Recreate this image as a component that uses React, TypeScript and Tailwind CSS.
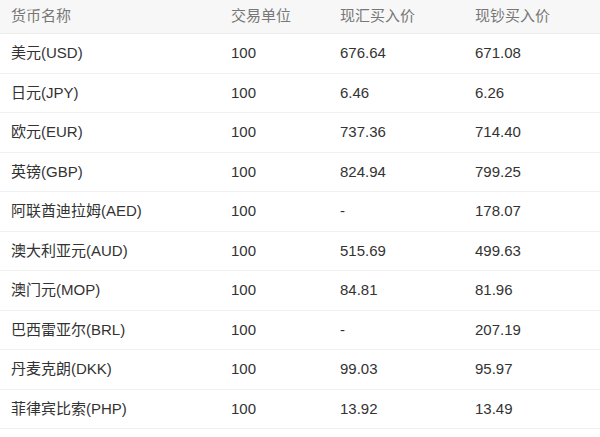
import React from 'react';

const rows: [string, string, string, string][] = [
  ['美元(USD)', '100', '676.64', '671.08'],
  ['日元(JPY)', '100', '6.46', '6.26'],
  ['欧元(EUR)', '100', '737.36', '714.40'],
  ['英镑(GBP)', '100', '824.94', '799.25'],
  ['阿联酋迪拉姆(AED)', '100', '-', '178.07'],
  ['澳大利亚元(AUD)', '100', '515.69', '499.63'],
  ['澳门元(MOP)', '100', '84.81', '81.96'],
  ['巴西雷亚尔(BRL)', '100', '-', '207.19'],
  ['丹麦克朗(DKK)', '100', '99.03', '95.97'],
  ['菲律宾比索(PHP)', '100', '13.92', '13.49'],
];

const cols = 'grid grid-cols-[220px_109px_135px_1fr] items-center';

const App: React.FC = () => {
  return (
    <div
      className="w-[600px] h-[437px] bg-white text-[15px] text-[#333]"
      style={{ fontFamily: '"Liberation Sans", "Noto Sans CJK SC", sans-serif' }}
    >
      <div className={`${cols} h-[34px] bg-[#f7f7f7] border-b border-[#ececec] text-[#777]`}>
        <div className="pl-[11px]">货币名称</div>
        <div className="pl-[11px]">交易单位</div>
        <div className="pl-[11px]">现汇买入价</div>
        <div className="pl-[11px]">现钞买入价</div>
      </div>
      {rows.map((r) => (
        <div key={r[0]} className={`${cols} h-[39.5px] border-b border-[#f0f0f0]`}>
          {r.map((c, i) => (
            <div key={i} className="pl-[11px]">{c}</div>
          ))}
        </div>
      ))}
    </div>
  );
};

export default App;
